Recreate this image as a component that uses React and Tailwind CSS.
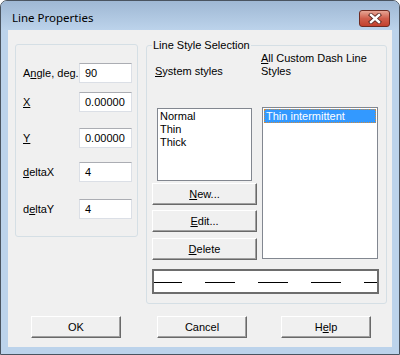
import React from 'react'

function Btn({ children, className = '' }) {
  return (
    <div
      className={`flex h-[22px] items-center justify-center border-t border-l border-white border-b border-r border-b-[#696969] border-r-[#696969] bg-[#f0f0f0] shadow-[inset_-1px_-1px_0_#a0a0a0] text-[11px] text-black ${className}`}
    >
      {children}
    </div>
  )
}

function Field({ label, value, className }) {
  return (
    <div className={`flex h-[20px] items-center justify-between ${className}`}>
      <span>{label}</span>
      <div className="flex h-[20px] w-[53px] items-center border border-[#dbdfe6] border-t-[#abadb3] bg-white pl-[5px]">
        {value}
      </div>
    </div>
  )
}

export default function App() {
  return (
    <div className="flex h-[355px] w-[400px] flex-col rounded-t-[7px] border border-[#4a5460] bg-[#bcd3eb] font-['Liberation_Sans',Arial,sans-serif] text-[11px] text-black">
      {/* title bar */}
      <div className="flex h-[29px] rounded-t-[6px] bg-gradient-to-b from-[#9fb8d4] to-[#bcd3eb]">
        <span className="pl-[11px] pt-[9px] font-['Noto_Sans',sans-serif] text-[11.5px] leading-[16px] text-black">
          Line Properties
        </span>
        <div className="ml-auto mr-[9px] mt-[9px] flex h-[17px] w-[31px] items-center justify-center rounded-[3px] border border-[#6e2b22] bg-gradient-to-b from-[#e6a595] via-[#cf5e4c] to-[#c3402d]">
          <svg width="14" height="11" viewBox="0 0 14 11">
            <path d="M3 2 L11 9 M11 2 L3 9" stroke="#5b2a24" strokeWidth="4.2" strokeLinecap="square" />
            <path d="M3 2 L11 9 M11 2 L3 9" stroke="#ffffff" strokeWidth="2.4" strokeLinecap="square" />
          </svg>
        </div>
      </div>

      {/* client area */}
      <div className="mx-[7px] flex h-[317px] flex-col bg-[#f0f0f0]">
        <div className="flex items-start">
          {/* position group */}
          <div className="ml-[7px] mt-[14px] h-[193px] w-[123px] rounded-[3px] border border-[#d5dfe5] pl-[7px] pr-[5px]">
            <Field className="mt-[18px]" label={<>A<u>n</u>gle, deg.</>} value="90" />
            <Field className="mt-[9px]" label={<u>X</u>} value="0.00000" />
            <Field className="mt-[16px]" label={<u>Y</u>} value="0.00000" />
            <Field className="mt-[14px]" label={<><u>d</u>eltaX</>} value="4" />
            <Field className="mt-[17px]" label={<>d<u>e</u>ltaY</>} value="4" />
          </div>

          {/* line style group */}
          <fieldset className="ml-[8px] mt-[8px] w-[241px] rounded-[3px] border border-[#d5dfe5] px-[5px] pb-[9px]">
            <legend className="px-[1px] leading-[14px]">Line Style Selection</legend>
            <div className="flex gap-[5px] leading-[13px]">
              <div className="flex w-[105px] flex-col">
                <span className="mt-[13px] pl-[3px]">
                  <u>S</u>ystem styles
                </span>
                <div className="ml-[5px] mt-[30px] h-[73px] w-[95px] border border-[#828790] bg-white pl-[2px] pt-[1px]">
                  <div>Normal</div>
                  <div>Thin</div>
                  <div>Thick</div>
                </div>
                <Btn className="mt-[2px]">
                  <u>N</u>ew...
                </Btn>
                <Btn className="mt-[5px]">
                  <u>E</u>dit...
                </Btn>
                <Btn className="mt-[6px]">
                  <u>D</u>elete
                </Btn>
              </div>
              <div className="flex w-[117px] flex-col">
                <span className="-ml-[1px]">
                  <u>A</u>ll Custom Dash Line
                  <br />
                  Styles
                </span>
                <div className="mt-[29px] h-[152px] w-[116px] border border-[#828790] bg-white p-[1px]">
                  <div className="h-[14px] border border-dotted border-[#d08a3a] bg-[#3399ff] pl-[1px] leading-[12px] text-white">
                    Thin intermittent
                  </div>
                </div>
              </div>
            </div>
            <div className="mt-[9px] h-[25px] w-[227px] border-2 border-[#6d6d6d] bg-white">
              <svg width="223" height="21" viewBox="0 0 223 21" className="block">
                <line x1="0" y1="11.5" x2="223" y2="11.5" stroke="#000" strokeWidth="1" strokeDasharray="30 23" strokeDashoffset="2" />
              </svg>
            </div>
          </fieldset>
        </div>

        {/* dialog buttons */}
        <div className="mt-[12px] flex">
          <Btn className="ml-[23px] w-[90px]">OK</Btn>
          <Btn className="ml-[36px] w-[90px]">Cancel</Btn>
          <Btn className="ml-[34px] w-[90px]">
            H<u>e</u>lp
          </Btn>
        </div>
      </div>
    </div>
  )
}
